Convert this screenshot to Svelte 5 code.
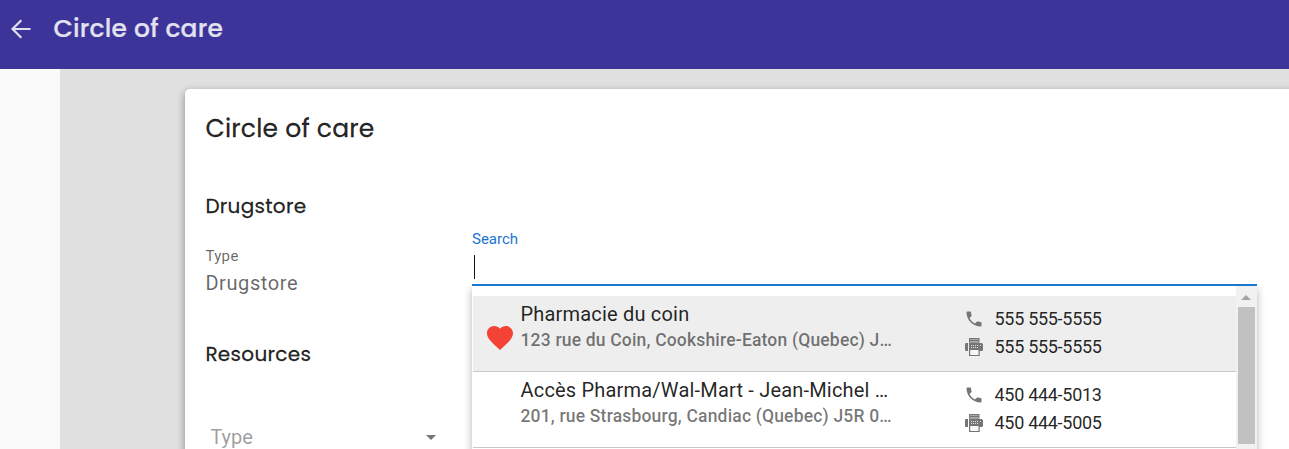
<script>
  const results = [
    { name: 'Pharmacie du coin', address: '123 rue du Coin, Cookshire-Eaton (Quebec) J…', phone: '555 555-5555', fax: '555 555-5555', favorite: true },
    { name: 'Accès Pharma/Wal-Mart - Jean-Michel …', address: '201, rue Strasbourg, Candiac (Quebec) J5R 0…', phone: '450 444-5013', fax: '450 444-5005', favorite: false }
  ];
</script>

<div class="app">
  <header>
    <svg class="back" viewBox="0 0 20 20" width="20" height="20"><path d="M19.5 10H1.7M10.3 1.2 1.5 10l8.8 8.8" /></svg>
    <h1>Circle of care</h1>
  </header>
  <div class="body">
    <nav></nav>
    <main>
      <section class="card">
        <div class="left">
          <h2>Circle of care</h2>
          <h3>Drugstore</h3>
          <div class="label">Type</div>
          <div class="value">Drugstore</div>
          <h3 class="resources">Resources</h3>
          <div class="select"><span>Type</span><i></i></div>
        </div>
        <div class="search">
          <label for="search">Search</label>
          <div class="input" id="search"><b class="caret"></b></div>
          <div class="menu">
            <div class="list">
              {#each results as r}
                <div class="item" class:active={r.favorite}>
                  <div class="fav">
                    {#if r.favorite}
                      <svg viewBox="2 3 20 18.35" width="26" height="24"><path fill="#f44336" d="M12 21.35l-1.45-1.32C5.4 15.36 2 12.28 2 8.5 2 5.42 4.42 3 7.5 3c1.74 0 3.41.81 4.5 2.09C13.09 3.81 14.76 3 16.5 3 19.58 3 22 5.42 22 8.5c0 3.78-3.4 6.86-8.55 11.54L12 21.35z" /></svg>
                    {/if}
                  </div>
                  <div class="info">
                    <div class="name">{r.name}</div>
                    <div class="address">{r.address}</div>
                  </div>
                  <div class="contact">
                    <div class="line">
                      <svg viewBox="0 0 24 24" width="20" height="20"><path d="M6.62 10.79c1.44 2.83 3.76 5.14 6.59 6.59l2.2-2.2c.27-.27.67-.36 1.02-.24 1.12.37 2.33.57 3.57.57.55 0 1 .45 1 1V20c0 .55-.45 1-1 1-9.39 0-17-7.61-17-17 0-.55.45-1 1-1h3.5c.55 0 1 .45 1 1 0 1.25.2 2.45.57 3.57.11.35.03.74-.25 1.02l-2.2 2.2z" /></svg>
                      <span>{r.phone}</span>
                    </div>
                    <div class="line">
                      <svg viewBox="0 0 20 20" width="20" height="20">
                        <path d="M5 1h10.500v4.700H5z" />
                        <path class="tray" d="M6 2h8.500v1H6zM6 4h8.500v1H6z" />
                        <path d="M2.200 6h1.800v8H2.200Q1 14 1 12.800V7.200Q1 6 2.200 6zM5 6h12.500Q19 6 19 7.500v5q0 1.500-1.500 1.500H5z" />
                        <path class="keys" d="M7 8h1v1H7zm2 0h1v1H9zm2 0h1v1h-1zm2 0h1v1h-1zM7 10h1v1H7zm2 0h1v1H9zm2 0h1v1h-1zm2 0h1v1h-1zM16 8h1v1h-1z" />
                        <path d="M5 12h10.700v7H5z" />
                        <path class="paper" d="M6.200 13h8.300v5H6.200z" />
                      </svg>
                      <span>{r.fax}</span>
                    </div>
                  </div>
                </div>
              {/each}
            </div>
            <div class="scroll"><i></i><div class="thumb"></div></div>
          </div>
        </div>
      </section>
    </main>
  </div>
</div>

<style>
  :global(body) { margin: 0; overflow: hidden; }
  .app { height: 449px; overflow: hidden; display: flex; flex-direction: column; font-family: Roboto, sans-serif; color: rgba(0,0,0,.87); }
  header { height: 69px; flex: none; box-sizing: border-box; background: #3d3499; display: flex; align-items: flex-start; padding: 9px 0 0 11px; }
  .back { margin-top: 10px; fill: none; stroke: #e2e1f0; stroke-width: 2.2; }
  h1, h2, h3 { margin: 0; font-family: Poppins, Inter, sans-serif; white-space: nowrap; }
  h1 { margin-left: 22.4px; font-size: 25px; line-height: 39px; font-weight: 500; color: #e2e1f0; letter-spacing: .22px; -webkit-text-stroke: .2px; }
  .body { flex: 1; display: flex; min-height: 0; }
  nav { width: 60px; background: #fafafa; }
  main { flex: 1; min-width: 0; background: #e0e0e0; padding: 20px 0 0 125px; }
  .card { height: 500px; width: 1150px; background: #fff; border-radius: 5px; box-shadow: 0 3px 8px rgba(0,0,0,.4); display: flex; }
  .left { width: 245.6px; flex: none; margin-left: 20.4px; }
  h2 { padding-top: 20px; font-size: 25px; line-height: 40px; font-weight: 400; letter-spacing: .22px; -webkit-text-stroke: .3px; }
  h3 { margin-top: 42px; font-size: 20px; line-height: 30px; font-weight: 400; letter-spacing: .3px; -webkit-text-stroke: .3px; }
  .label { margin-top: 26px; font-size: 15px; line-height: 18px; color: rgba(0,0,0,.6); letter-spacing: .35px; }
  .value { margin-top: 4px; font-size: 20px; line-height: 28px; color: rgba(0,0,0,.6); letter-spacing: .6px; }
  h3.resources { margin-top: 42px; }
  .select { margin-top: 54px; height: 28px; line-height: 28px; display: flex; align-items: center; justify-content: space-between; padding: 0 15px 0 5px; font-size: 20px; color: rgba(0,0,0,.4); }
  .select i { border: 5px solid transparent; border-top-color: #757575; border-bottom: 0; }
  .search { width: 785px; margin-left: 21px; padding-top: 140px; }
  label { display: block; font-size: 15px; line-height: 20px; color: #1976d2; }
  .input { height: 35px; border-bottom: 2px solid #1976d2; display: flex; }
  .caret { width: 1px; height: 24px; background: #111; margin: 6px 0 0 2px; }
  .menu { height: 300px; background: #fff; display: flex; box-shadow: 0 3px 8px rgba(0,0,0,.3); clip-path: inset(0 -12px 0 -12px); }
  .list { flex: 1; padding: 10px 0 0 1px; }
  .item { height: 75px; border-bottom: 1px solid #c8c8c8; display: flex; }
  .item.active { background: #eee; }
  .fav { width: 47.5px; flex: none; padding: 30px 0 0 14px; box-sizing: border-box; }
  .info { width: 443.5px; padding-top: 5px; white-space: nowrap; }
  .name { font-size: 20px; line-height: 26px; letter-spacing: .19px; }
  .address { font-size: 17.5px; line-height: 26px; font-weight: 500; color: rgba(0,0,0,.54); letter-spacing: .18px; }
  .contact { padding-top: 9px; }
  .line { height: 28px; display: flex; align-items: center; gap: 10.5px; font-size: 18px; letter-spacing: -.29px; }
  .line span { line-height: 22px; }
  .line svg { fill: #757575; }
  .line .tray { fill: #aaa; }
  .line .keys { fill: #ddd; }
  .line .paper { fill: #f7f7f7; }
  .scroll { width: 21px; background: #f1f1f1; display: flex; flex-direction: column; align-items: center; }
  .scroll i { margin: 9px 0 7px; border: 5px solid transparent; border-bottom-color: #a3a3a3; border-top: 0; }
  .thumb { width: 17px; height: 137px; background: #c1c1c1; }
</style>
